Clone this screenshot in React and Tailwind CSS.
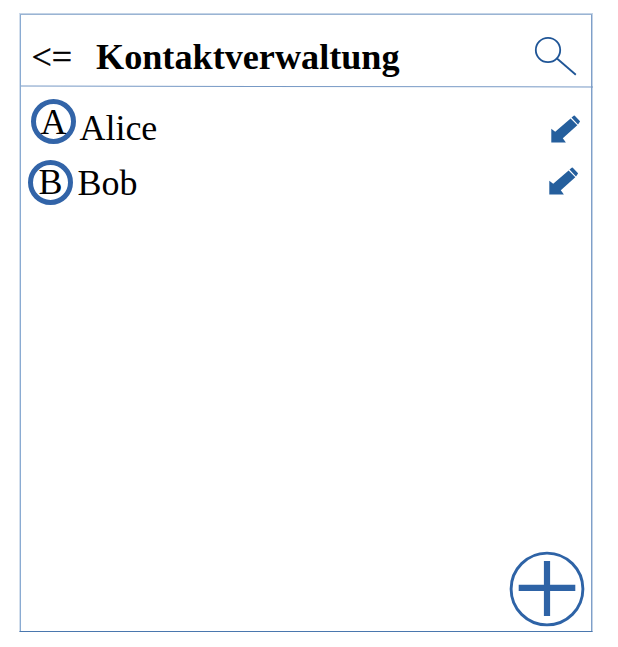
const contacts = [
  { name: 'Alice', row: 'h-[54px] pl-[10.4px] pr-[11px]', avatar: 'mt-[12px]', letter: '-translate-x-[0.5px]', label: 'mt-[20px] ml-[3px]', pencil: 'mt-[28px]' },
  { name: 'Bob', row: 'h-[60px] pl-[7.4px] pr-[13px]', avatar: 'mt-[18.5px]', letter: '-translate-x-[0.5px]', label: 'mt-[21px] ml-[4px]', pencil: 'mt-[26px]' },
];

function SearchIcon() {
  return (
    <svg width="44" height="42" viewBox="0 0 44 42" fill="none" stroke="#1f5596" strokeWidth="1.8">
      <circle cx="15" cy="15" r="12.2" />
      <path d="M24 23.5 42.8 39.8" />
    </svg>
  );
}

function PencilIcon() {
  return (
    <svg width="30" height="29" viewBox="0 0 30 29" fill="#255f9d">
      <path d="M1.3 27.6V13.8L5.2 16.8 20.6 3.4 27.3 10.3 12.8 23.2 15.9 27.6Z" />
      <path d="M21.5 2.6 23.7.7Q24.3.2 24.8.8L29.8 6Q30.2 6.5 29.7 7.1L28 9.5Z" />
    </svg>
  );
}

function AddIcon() {
  return (
    <svg width="76" height="76" viewBox="0 0 76 76" fill="none" stroke="#2e63a6">
      <circle cx="38" cy="38" r="35.9" strokeWidth="2.9" />
      <path d="M38 10V65M9.7 36.8H66.3" strokeWidth="6.2" />
    </svg>
  );
}

export default function App() {
  return (
    <div className="h-[647px] w-[618px] overflow-hidden bg-white pt-[13px] pl-[19px] font-['Liberation_Serif',serif] text-[36px] leading-[42px] text-black">
      <main className="flex h-[619px] w-[574px] flex-col border border-t-[#c3d3e6] border-r-[#c3d3e6] border-b-[#4a77ae] border-l-[#d3dfed]">
        <div className="flex h-full w-[572px] flex-col border-t border-r border-l border-t-[#9ab4d3] border-r-[#7f9fc9] border-l-[#8aabd2]">
          <header className="flex h-[72px] shrink-0 items-start pl-[10.5px] pr-[14px]">
            <button className="mt-[21px] w-[64.5px] text-left [-webkit-text-stroke:0.4px_black]">&lt;=</button>
            <h1 className="mt-[21px] text-[36.2px] font-bold">Kontaktverwaltung</h1>
            <button className="mt-[20px] ml-auto" aria-label="Suchen"><SearchIcon /></button>
          </header>
          <div className="-mt-px h-px w-[572px] shrink-0 rotate-[0.08deg] bg-[#7799c5]" />
          <ul>
            {contacts.map((c) => (
              <li key={c.name} className={`flex items-start ${c.row}`}>
                <span className={`flex size-[45px] shrink-0 items-center justify-center rounded-full border-[5px] border-[#3264a8] ${c.avatar}`}>
                  <span className={c.letter}>{c.name[0]}</span>
                </span>
                <span className={c.label}>{c.name}</span>
                <button className={`ml-auto ${c.pencil}`} aria-label="Bearbeiten"><PencilIcon /></button>
              </li>
            ))}
          </ul>
          <footer className="mt-auto flex justify-end pr-[6px] pb-[4px]">
            <button aria-label="Hinzufügen"><AddIcon /></button>
          </footer>
        </div>
      </main>
    </div>
  );
}
